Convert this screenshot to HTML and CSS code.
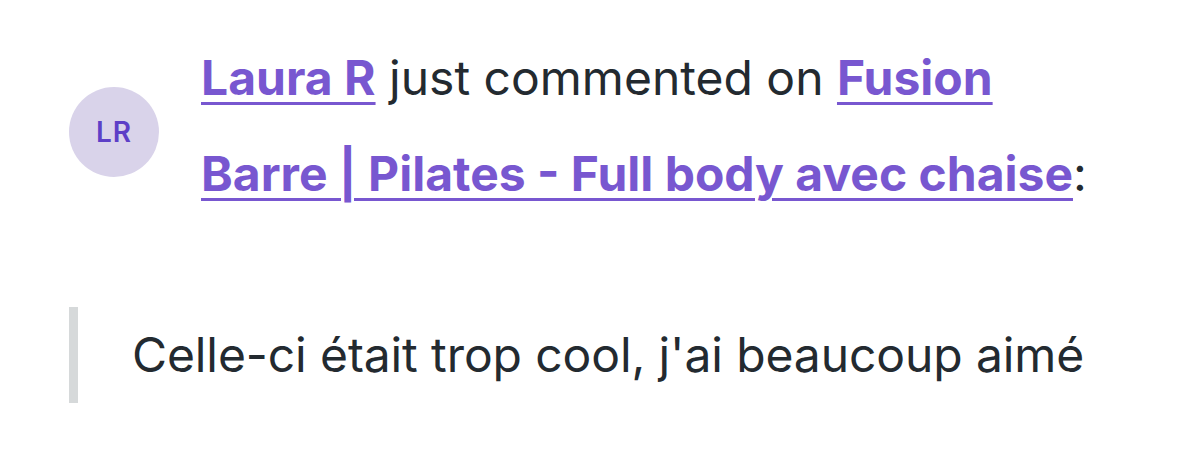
FILE: index.html
```html
<!DOCTYPE html>
<html lang="fr">
<head>
<meta charset="utf-8">
<link rel="stylesheet" href="styles.css">
</head>
<body>
<div class="comment">
  <div class="header">
    <div class="avatar">LR</div>
    <p class="headline"><a href="#" class="link">Laura R</a> just commented on <a href="#" class="link">Fusion Barre | Pilates - Full body avec chaise</a>:</p>
  </div>
  <blockquote class="quote">Celle-ci était trop cool, j'ai beaucoup aimé</blockquote>
</div>
</body>
</html>
```
FILE: styles.css
```css
html, body {
  margin: 0;
  padding: 0;
  background: #ffffff;
}
body {
  font-family: Inter, "Noto Sans", sans-serif;
  color: #232a30;
}
.comment {
  padding: 30px 60px 0 69px;
}
.header {
  display: flex;
  align-items: flex-start;
  gap: 42px;
}
.avatar {
  flex: none;
  width: 90px;
  height: 90px;
  margin-top: 57px;
  border-radius: 50%;
  background: #d9d3ea;
  color: #5d3fc7;
  font-size: 28px;
  font-weight: 600;
  display: flex;
  align-items: center;
  justify-content: center;
  letter-spacing: 1px;
}
.headline {
  margin: 0;
  font-size: 48px;
  line-height: 96px;
  max-width: 900px;
}
.link {
  color: #7857d0;
  font-weight: 700;
  text-decoration: underline;
  text-decoration-thickness: 3px;
  text-underline-offset: 7px;
}
.quote {
  margin: 85px 0 0 0;
  border-left: 9px solid #d6d9da;
  padding-left: 54px;
  font-size: 48px;
  line-height: 96px;
  letter-spacing: -0.1px;
}
```
